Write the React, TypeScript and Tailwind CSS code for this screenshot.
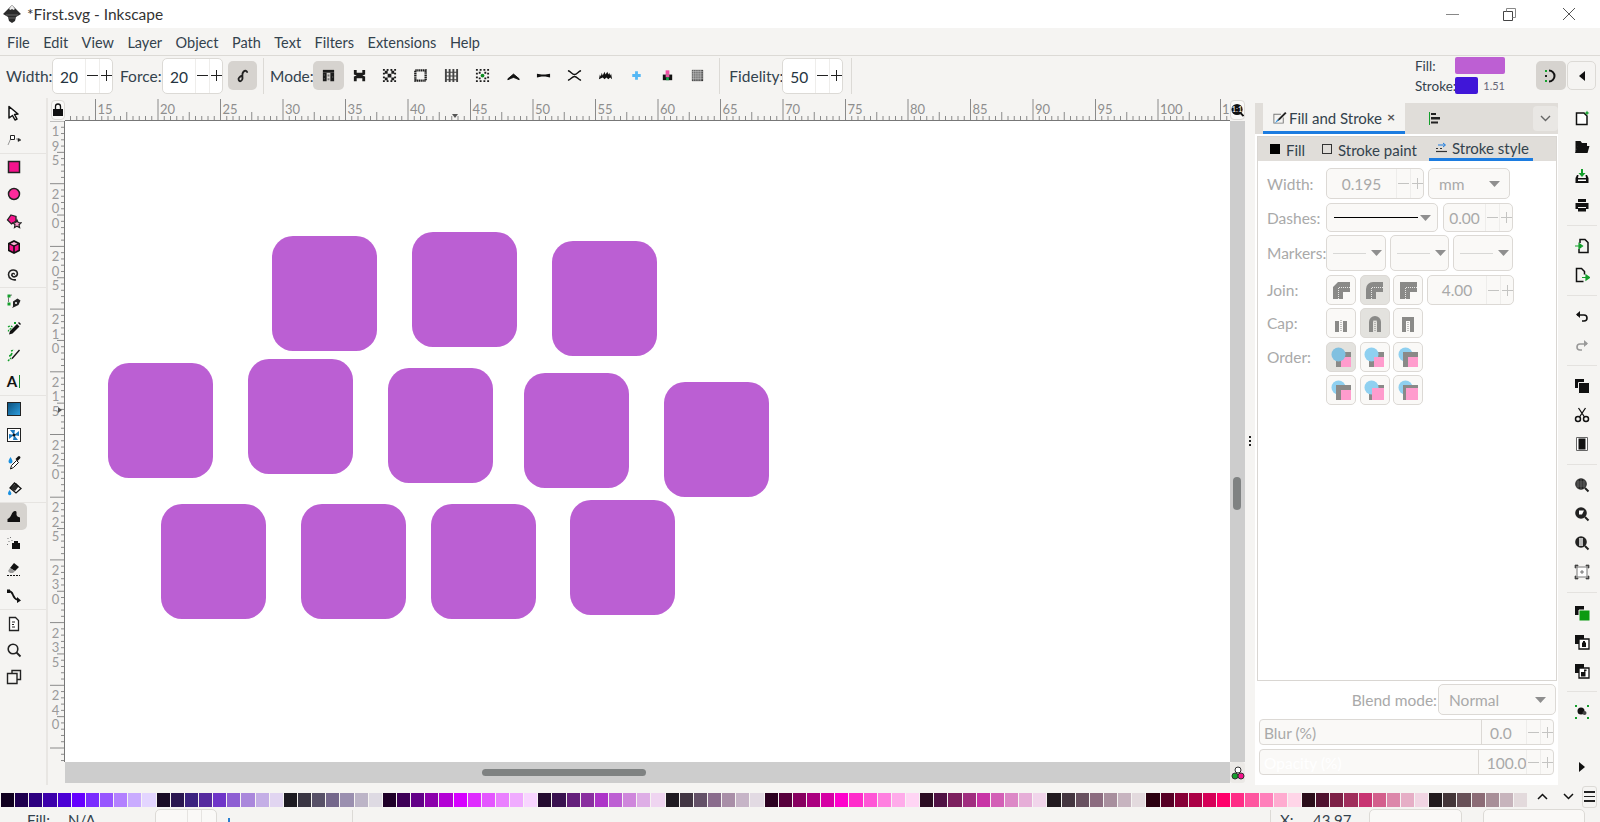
import type { ReactNode } from 'react'

const palette = [
  '#10001f', '#1f0050', '#2d0080', '#3c00ab', '#4b00d5', '#6600ff', '#7a2cff', '#9756ff', '#b380ff', '#c9abff', '#e3d5ff',
  '#190c26', '#2a1650', '#3c2380', '#562a9f', '#6f35c8', '#8e5fd3', '#aa87dc', '#c4aee6', '#e1d5f1',
  '#1d1b22', '#3a3644', '#585168', '#75688c', '#9a8faf', '#bcb4c7', '#dedae3',
  '#1f0029', '#3e0057', '#620087', '#8b00ab', '#b300d5', '#d600ff', '#df2cff', '#e456ff', '#ea80ff', '#f0abff', '#f8d5ff',
  '#240b30', '#3a1250', '#65207c', '#8a2ea0', '#ad34c8', '#bd5fd3', '#cf87dc', '#deaee6', '#efd5f1',
  '#201b22', '#423644', '#645168', '#8a6c8d', '#a98fa8', '#c6b4c7', '#e2dae3',
  '#2b0020', '#57003d', '#870060', '#ab0080', '#d500a4', '#ff00cc', '#ff2ccb', '#ff56d6', '#ff80e0', '#ffabea', '#ffd5f4',
  '#2b0d23', '#501245', '#7c205f', '#a02e7f', '#c834a6', '#d35fb6', '#dc87c6', '#e6aed8', '#f1d5eb',
  '#221b20', '#443640', '#685160', '#8c6c80', '#a88f9e', '#c7b4c0', '#e3dade',
  '#2b0010', '#570026', '#870037', '#ab0046', '#d50057', '#ff006a', '#ff2c86', '#ff56a0', '#ff80bb', '#ffabd0', '#ffd5e8',
  '#2b0d1a', '#50122f', '#7c2046', '#a02e5c', '#c83472', '#d35f8c', '#dc87aa', '#e6aec6', '#f1d5e3',
  '#221b1e', '#443639', '#685158', '#8c6c76', '#a88f98', '#c7b4bc', '#e3dadc',
]

const squares = [
  [206.5, 114.7], [346.5, 110.5], [486.5, 119.8],
  [43.3, 242.3], [183.3, 238], [323, 247.4], [458.5, 251.5], [598.5, 260.6],
  [96.3, 383], [236, 383], [365.6, 383], [505.4, 379],
]

const menus = ['File', 'Edit', 'View', 'Layer', 'Object', 'Path', 'Text', 'Filters', 'Extensions', 'Help']

function Ico({ children, size = 16 }: { children: ReactNode; size?: number }) {
  return (
    <svg width={size} height={size} viewBox="0 0 16 16" className="shrink-0">
      {children}
    </svg>
  )
}

function PlusMinus({ muted }: { muted?: boolean }) {
  const color = muted ? '#c4c4c2' : '#222'
  return (
    <>
      <div className="flex w-[14px] items-center justify-center border-l border-[#eeedeb]">
        <svg width="11" height="11" viewBox="0 0 11 11">
          <path d="M0 5.5h11" stroke={color} strokeWidth="1" />
        </svg>
      </div>
      <div className="flex w-[13px] items-center justify-center border-l border-[#eeedeb]">
        <svg width="11" height="11" viewBox="0 0 11 11">
          <path d="M0 5.5h11M5.5 0v11" stroke={color} strokeWidth="1" />
        </svg>
      </div>
    </>
  )
}

function TopSpin({ value }: { value: string }) {
  return (
    <div className="flex h-[36px] w-[61px] shrink-0 rounded-[5px] border border-[#dcdad6] bg-white">
      <div className="flex-1 text-center text-[15.5px] leading-[36px] text-[#26343f]">{value}</div>
      <PlusMinus />
    </div>
  )
}

function PanelSpin({ value, className }: { value: string; className: string }) {
  return (
    <div className={'flex shrink-0 rounded-[5px] border border-[#dcd9d5] bg-[#faf9f7] ' + className}>
      <div className="flex flex-1 items-center justify-center pt-[2px] text-[15.5px] text-[#a9a9a9]">{value}</div>
      <PlusMinus muted />
    </div>
  )
}

function Lab({ children }: { children: ReactNode }) {
  return <span className="w-[59px] pt-[2px]">{children}</span>
}

function Caret() {
  return (
    <svg width="11" height="6" viewBox="0 0 11 6" className="shrink-0">
      <path d="M0 0h11L5.5 6z" fill="#8f8f8f" />
    </svg>
  )
}

function Sq({ active, children }: { active?: boolean; children: ReactNode }) {
  return (
    <div
      className={
        'flex h-[30px] w-[30px] shrink-0 items-center justify-center rounded-[5px] border border-[#dcd9d5] ' +
        (active ? 'bg-[#e3e2de]' : 'bg-[#faf9f7]')
      }
    >
      {children}
    </div>
  )
}

function JoinIcon({ kind }: { kind: number }) {
  const outer = ['M0 17V5L5 0h12v10H10v7z', 'M0 17V7a7 7 0 0 1 7-7h10v10H10v7z', 'M0 17V0h17v10H10v7z'][kind]
  return (
    <svg width="17" height="17" viewBox="0 0 17 17">
      <path d={outer} fill="#8a8a88" />
      <path d="M5.5 17V5.500H17" fill="none" stroke="#e8e8e6" strokeWidth="1" strokeDasharray="1 1" />
    </svg>
  )
}

function CapIcon({ kind }: { kind: number }) {
  const p = ['M1 6h4v11H1zM9 6h4v11H9z', 'M1 17V7a6 6 0 0 1 12 0v10H9V7a2 2 0 0 0-4 0v10z', 'M1 17V2h12v15H9V6H5v11z'][kind]
  return (
    <svg width="14" height="17" viewBox="0 0 14 17">
      <path d={p} fill="#8a8a88" />
      <path d="M7 5v12" stroke="#8a8a88" strokeWidth="1" strokeDasharray="1 1" />
    </svg>
  )
}

function OrderIcon({ kind }: { kind: number }) {
  const circle = <circle key="c" cx="7.5" cy="7.5" r="7" fill={kind === 0 ? '#80c0e0' : '#8fd0f0'} />
  const stroke = <path key="s" d="M5 5h15v15H5z" fill="#8a8a88" />
  const fill = <path key="f" d={kind > 3 ? 'M8 8h12v12H8z' : 'M10 10h10v10H10z'} fill="#ff9ccd" />
  let layers = [stroke, fill, circle]
  if (kind === 1 || kind === 4) layers = [stroke, circle, fill]
  if (kind === 2 || kind === 3 || kind === 5) layers = [circle, stroke, fill]
  return (
    <svg width="21" height="21" viewBox="0 0 21 21">
      {layers}
    </svg>
  )
}

function ModeIcon({ index }: { index: number }) {
  const dots = 'M1 1h2v2H1zM5 1h2v2H5zM9 1h2v2H9zM13 1h2v2h-2zM1 13h2v2H1zM5 13h2v2H5zM9 13h2v2H9zM13 13h2v2h-2zM1 5h2v2H1zM1 9h2v2H1zM13 5h2v2h-2zM13 9h2v2h-2z'
  const body: ReactNode[] = [
    <g key="a">
      <path d="M2 2h12v3H2z" fill="#1c1c1c" />
      <path d="M2 5h4v9H2zM10 5h4v9h-4z" fill="#1c1c1c" />
      <path d="M7 7h2v2H7zM7 11h2v2H7zM3 7h1v1H3zM12 9h1v1h-1zM3 11h1v1H3z" fill="#777" />
    </g>,
    <path key="b" d={'M2 2h3v3h6V2h3v5l-3 1 3 1v5h-3v-3H5v3H2V9l3-1-3-1z'} fill="#1c1c1c" />,
    <path key="c" d={dots + 'M3 3h3v3H3zM10 3h3v3h-3zM6 6h4v4H6zM3 10h3v3H3zM10 10h3v3h-3z'} fill="#1c1c1c" />,
    <path key="d" d="M2.5 2.500h11v11h-11z" fill="none" stroke="#1c1c1c" strokeWidth="2.500" strokeDasharray="1.500 .5" />,
    <path key="e" d="M1 1h2v14H1zM5 1h2v14H5zM9 1h2v14H9zM13 1h2v14h-2zM1 4h14v1H1zM1 8h14v1H1zM1 12h14v1H1z" fill="#444" />,
    <g key="f">
      <path d={dots + 'M4 4h2v2H4zM10 4h2v2h-2zM4 10h2v2H4zM10 10h2v2h-2z'} fill="#1c1c1c" />
      <circle cx="8" cy="8" r="2" fill="#0a8a20" />
    </g>,
    <path key="g" d="M2 11.500 8 6.500l6 5v1l-3.500-1.500L8 10l-2.500 1L2 12.500z" fill="#111" strokeWidth="1" stroke="#111" />,
    <path key="h" d="M1 6v4l5-1h4l5 1V6l-5 1H6z" fill="#111" />,
    <path key="i" d="M1 3c3 0 4 4 7 4s4-4 7-4M1 13c3 0 4-4 7-4s4 4 7 4" fill="none" stroke="#111" strokeWidth="1.500" />,
    <path key="j" d="M1 12 2 7l1 2 1-4 1 3 2-4 1 3 2-3 1 3 1-2 1 3 1-2 1 6-2-2-2 2-2-2-2 2-2-2z" fill="#111" />,
    <path key="k" d="M6.5 3.500h3v3h3v3h-3v3h-3v-3h-3v-3h3z" fill="#55b8f5" />,
    <g key="l">
      <path d="M6 2.500h4v4H6z" fill="#f24fa5" />
      <path d="M3 7h5v6H3z" fill="#111" />
      <path d="M8 7h5v6H8z" fill="#111" />
      <path d="M6 7h4v3H6z" fill="#f24fa5" />
      <path d="M6.500 10h3v3h-3z" fill="#16a34a" />
    </g>,
    <g key="m">
      <path d="M2 2h12v12H2z" fill="#333" />
      <path d="M3.500 2v12M5.500 2v12M7.500 2v12M9.500 2v12M11.500 2v12M2 3.500h12M2 5.500h12M2 7.500h12M2 9.500h12M2 11.500h12" stroke="#ddd" strokeWidth="0.7" />
    </g>,
  ]
  return <Ico size={15}>{body[index]}</Ico>
}

const modeIcons = Array.from({ length: 13 }, (_, i) => i)

function Tool({ active, children }: { active?: boolean; children: ReactNode }) {
  return (
    <div
      className={
        'flex h-[26.6px] w-[27px] shrink-0 items-center justify-center rounded-r-[5px] ' +
        (active ? 'bg-[#d6d3cf]' : '')
      }
    >
      {children}
    </div>
  )
}

function LeftSep() {
  return <div className="h-[1px] w-[46px] shrink-0 bg-[#e6e4e1]" />
}

function LeftTools() {
  return (
    <div className="flex w-[48px] shrink-0 flex-col border-r-2 border-[#e8e6e3] pt-[2px]">
      <Tool>
        <Ico><path d="M3 1.500 12 9l-3.500.5 2.500 4.500-2 1L6.500 10.500 3 13z" fill="#fff" stroke="#111" strokeWidth="1.500" strokeLinejoin="round" /></Ico>
      </Tool>
      <Tool>
        <Ico>
          <path d="M2 13 5 6" stroke="#999" strokeWidth="1" />
          <path d="M4.500 3.500h4v4h-4z" fill="#fff" stroke="#222" strokeWidth="1" />
          <path d="M10 7h4M12 9.500l3-1.500-3-1.500z" stroke="#222" fill="#222" strokeWidth="0.5" />
        </Ico>
      </Tool>
      <LeftSep />
      <Tool>
        <Ico><path d="M2.500 2.500h11v11h-11z" fill="#f5138d" stroke="#222" strokeWidth="1.500" /></Ico>
      </Tool>
      <Tool>
        <Ico><circle cx="8" cy="8" r="5.500" fill="#ff2b9c" stroke="#222" strokeWidth="1.500" /></Ico>
      </Tool>
      <Tool>
        <Ico>
          <path d="M5 2 10 3.500 10 8 5.500 11 1.500 7z" fill="#f5138d" stroke="#222" strokeWidth="1.300" />
          <path d="m11 7 1.200 2.500 2.800.3-2 1.900.6 2.800-2.600-1.400-2.500 1.400.5-2.800-2-1.900 2.800-.3z" fill="#ff9ccd" stroke="#222" strokeWidth="1.200" />
        </Ico>
      </Tool>
      <Tool>
        <Ico>
          <path d="M8 1 14 4v8l-6 3-6-3V4z" fill="#111" />
          <path d="M3.500 5.500 7.200 7.400v5.300L3.500 10.800zM12.500 5.500 8.800 7.400v5.300l3.700-1.900z" fill="#f5138d" />
          <path d="M8 3 11.500 4.700 8 6.300 4.500 4.700z" fill="#ffb0d8" />
        </Ico>
      </Tool>
      <Tool>
        <Ico><path d="M8.200 8.500c.6-1-1.500-1.600-2.200-.3-.9 1.700 1.400 3.200 3.300 2.400 3-1.200 2.700-5.500-.6-6.400C5.300 3.200 2.400 5.700 2.500 8.700c.2 3.700 4 5.700 7.500 5" fill="none" stroke="#222" strokeWidth="1.600" /></Ico>
      </Tool>
      <LeftSep />
      <Tool>
        <Ico>
          <path d="M2.500 9V4.500C3 3 4.500 2 6 2" fill="none" stroke="#777" strokeWidth="1" />
          <path d="M1.500 1.500h3v3h-3zM1.500 9.500h3v3h-3z" fill="#14a02c" />
          <path d="M7 13.500 6 15l1.800-.7 4.700-2.300 2-4.500-3-2-4.500 3z" fill="#222" />
          <circle cx="10" cy="10" r="1" fill="#fff" />
        </Ico>
      </Tool>
      <Tool>
        <Ico>
          <path d="M2 7c3-2 5-.5 3.500 1S2 10 2.500 11.500" fill="none" stroke="#14a02c" strokeWidth="1.300" strokeDasharray="2 1" />
          <path d="M3 14.500 4 11 11 4l2.500 2.500-7 7z" fill="#111" />
          <path d="M12 3l1-1 2 2-1 1z" fill="#111" />
          <path d="M8 2h2v2H8z" fill="#14a02c" />
        </Ico>
      </Tool>
      <Tool>
        <Ico>
          <path d="M2 14 5 11M5 4 8 3" stroke="#14a02c" strokeWidth="1.500" strokeDasharray="2 1" />
          <path d="M5.500 12.500 6 10.500 13 2.500l1 1-7 8z" fill="#111" />
          <path d="M3 9c1.500 0 2.500-1 3-3" fill="none" stroke="#14a02c" strokeWidth="1.500" />
        </Ico>
      </Tool>
      <Tool>
        <span className="text-[15px] font-bold leading-none text-[#111]">A</span>
        <span className="ml-[2px] h-[13px] w-[1px] bg-[#14902c]" />
      </Tool>
      <LeftSep />
      <Tool>
        <svg width="14" height="14" viewBox="0 0 14 14">
          <defs>
            <linearGradient id="gradtool" x1="0" y1="0" x2="1" y2="1">
              <stop offset="0" stopColor="#0a4e7a" />
              <stop offset="1" stopColor="#2e9fe0" />
            </linearGradient>
          </defs>
          <rect x="0.5" y="0.5" width="13" height="13" fill="url(#gradtool)" stroke="#222" strokeWidth="1" />
        </svg>
      </Tool>
      <Tool>
        <svg width="14" height="14" viewBox="0 0 14 14">
          <rect x="0.5" y="0.5" width="13" height="13" fill="#fff" stroke="#222" strokeWidth="1" />
          <path d="M7 7 3 2h5zM7 7l5-4v5zM7 7l4 5H6zM7 7l-5 4V6z" fill="#1d7ac0" />
          <circle cx="7" cy="7" r="1.500" fill="#111" />
        </svg>
      </Tool>
      <Tool>
        <Ico>
          <path d="M4.500 3C3.500 5 2.500 6 2.500 7.500a2 2 0 0 0 4 0C6.500 6 5.500 5 4.500 3z" fill="#1a90e0" />
          <path d="M4.500 15l1-3.500 5-5 2 2-5 5z" fill="#fff" stroke="#111" strokeWidth="1" />
          <path d="M9.500 5 12 2.500a1.300 1.300 0 0 1 2 2L11.500 7z" fill="#111" />
        </Ico>
      </Tool>
      <Tool>
        <Ico>
          <path d="M8.500 2 15 7.500 10 12 4 7z" fill="#fff" stroke="#111" strokeWidth="1.300" />
          <path d="M4 7 10 2 13 5l-4 5z" fill="#111" opacity="0.9" />
          <path d="M3.500 9C2.700 10.500 2 11.500 2 12.500a1.700 1.700 0 0 0 3.400 0c0-1-.9-2-1.900-3.500z" fill="#1a90e0" />
        </Ico>
      </Tool>
      <LeftSep />
      <Tool active>
        <Ico><path d="M1.500 14V11c2-1 3-2 4-4.500C6.500 4 8 2.500 9.500 3c1.500.5 1 2 1 3.500 0 1.500 1.500 2.500 3.500 3V14z" fill="#111" /></Ico>
      </Tool>
      <Tool>
        <Ico>
          <path d="M1.500 3h1v1h-1zM4 2h1v1H4zM2.500 6h1v1h-1zM5.500 5h1v1h-1zM1 9h1v1H1z" fill="#777" />
          <path d="M6 8h8v6H6zM8 6h4v2H8z" fill="#111" />
        </Ico>
      </Tool>
      <Tool>
        <Ico>
          <path d="m8 2 5 4-4 4-5-3z" fill="#111" />
          <path d="m4 7 5 3-2 2H4l-2-2z" fill="#999" />
          <path d="M1 14.500h13" stroke="#111" strokeWidth="1" strokeDasharray="2 1" />
        </Ico>
      </Tool>
      <Tool>
        <Ico>
          <path d="M2 3c3 0 4 1 5 4s2 4 5 5" fill="none" stroke="#111" strokeWidth="1.800" />
          <path d="M11 9l4 3.500-4 2.500zM1 1.500h3V5H1z" fill="#111" />
        </Ico>
      </Tool>
      <LeftSep />
      <Tool>
        <Ico><path d="M3.500 1.500h6l3 3v10h-9z" fill="#fff" stroke="#222" strokeWidth="1.300" /><path d="M6 6h3M6 8.500h2M6 11h3" stroke="#222" strokeWidth="1" /></Ico>
      </Tool>
      <Tool>
        <Ico><circle cx="7" cy="7" r="4.800" fill="none" stroke="#222" strokeWidth="1.600" /><path d="m10.500 10.500 4 4" stroke="#222" strokeWidth="1.800" /></Ico>
      </Tool>
      <Tool>
        <Ico><path d="M6 4V1.500h8.500v9H11M1.500 4.500H11v10H1.500z" fill="none" stroke="#222" strokeWidth="1.400" /></Ico>
      </Tool>
    </div>
  )
}

function RightBtn({ children }: { children: ReactNode }) {
  return <div className="flex h-[29px] shrink-0 items-center justify-center">{children}</div>
}

function RightSep() {
  return (
    <div className="flex h-[12px] shrink-0 items-center justify-center">
      <div className="h-[1px] w-[30px] bg-[#e4e2df]" />
    </div>
  )
}

function Zoomer({ children }: { children: ReactNode }) {
  return (
    <Ico>
      <circle cx="7" cy="7" r="5.800" fill="#222" />
      {children}
      <path d="m11 11 3.500 3.500" stroke="#222" strokeWidth="2" />
    </Ico>
  )
}

function StackIcon({ children }: { children: ReactNode }) {
  return (
    <Ico>
      <path d="M1 1h9v9H1z" fill="#111" />
      {children}
    </Ico>
  )
}

function RightTools() {
  return (
    <div className="flex w-[42px] shrink-0 flex-col pt-[5.5px] pb-[3.5px] pl-[6px]">
      <RightBtn>
        <Ico>
          <path d="M2.500 3h7.500l3 3v8.500H2.500z" fill="#fff" stroke="#111" strokeWidth="1.500" />
          <path d="M13 0.500l.8 1.700 1.700.8-1.700.8-.8 1.700-.8-1.700-1.700-.8 1.700-.8z" fill="#14a02c" />
        </Ico>
      </RightBtn>
      <RightBtn>
        <Ico>
          <path d="M1.500 2h5l1.500 2h5v3H4L1.500 13z" fill="#111" />
          <path d="M3.500 7h12l-2 7H1z" fill="#111" />
        </Ico>
      </RightBtn>
      <RightBtn>
        <Ico>
          <path d="M7 1h2v4h2.500L8 9 4.500 5H7z" fill="#14a02c" />
          <path d="M1.500 10 3 7h1.500L4 10h8l-.5-3H13l1.500 3v5h-13z" fill="#111" />
          <path d="M4 11.500h8v1.500H4z" fill="#fff" />
        </Ico>
      </RightBtn>
      <RightBtn>
        <Ico>
          <path d="M4 2h8v3H4zM1.500 6h13v6H12v-2H4v2H1.500z" fill="#111" />
          <path d="M4 11h8v3.500H4z" fill="#111" />
        </Ico>
      </RightBtn>
      <RightSep />
      <RightBtn>
        <Ico>
          <path d="M6 5V1.500h5l3 3v10H5V11" fill="none" stroke="#111" strokeWidth="1.500" />
          <path d="M1 8h6M5 5.500 8.500 8 5 10.500z" fill="#14a02c" stroke="#14a02c" strokeWidth="1.200" />
        </Ico>
      </RightBtn>
      <RightBtn>
        <Ico>
          <path d="M9.500 14.500h-7v-13h5l3 3v3" fill="none" stroke="#111" strokeWidth="1.500" />
          <path d="M8 10.500h5M12 8l3.500 2.500L12 13z" fill="#14a02c" stroke="#14a02c" strokeWidth="1.200" />
        </Ico>
      </RightBtn>
      <RightSep />
      <RightBtn>
        <Ico>
          <path d="M3 7h7a3 3 0 0 1 0 6H8" fill="none" stroke="#111" strokeWidth="1.600" />
          <path d="M6 3v7L2 6.500z" fill="#111" />
        </Ico>
      </RightBtn>
      <RightBtn>
        <Ico>
          <path d="M13 7H6a3 3 0 0 0 0 6h2" fill="none" stroke="#999" strokeWidth="1.600" />
          <path d="M10 3v7l4-3.500z" fill="#999" />
        </Ico>
      </RightBtn>
      <RightSep />
      <RightBtn>
        <Ico>
          <path d="M1 1h9v9H1z" fill="#111" />
          <path d="M4.500 4.500h11v11h-11z" fill="#111" stroke="#f5f4f2" strokeWidth="1" />
        </Ico>
      </RightBtn>
      <RightBtn>
        <Ico>
          <circle cx="4" cy="12" r="2.500" fill="none" stroke="#111" strokeWidth="1.500" />
          <circle cx="12" cy="12" r="2.500" fill="none" stroke="#111" strokeWidth="1.500" />
          <path d="M4.500 1 10.500 10M11.500 1 5.500 10" stroke="#111" strokeWidth="1.300" />
        </Ico>
      </RightBtn>
      <RightBtn>
        <Ico>
          <path d="M2.500 1.500h11v13h-11z" fill="#fff" stroke="#666" strokeWidth="1" />
          <path d="M4.500 2.500h7v11h-7z" fill="#111" />
        </Ico>
      </RightBtn>
      <RightSep />
      <RightBtn>
        <Zoomer>
          <path d="M2 5h10M2 7h10M2 9h10M4 2v10M7 1.500v11M10 2v10" stroke="#888" strokeWidth="0.5" />
        </Zoomer>
      </RightBtn>
      <RightBtn>
        <Zoomer>
          <path d="M5 4.500h5l-2 4H5z" fill="#fff" />
        </Zoomer>
      </RightBtn>
      <RightBtn>
        <Zoomer>
          <path d="M5 3h4v8H5z" fill="#bbb" />
        </Zoomer>
      </RightBtn>
      <RightBtn>
        <Ico>
          <path d="M3 3h10v10H3z" fill="#fff" stroke="#777" strokeWidth="1" />
          <path d="M1 1h3v1H2v2H1zM12 1h3v3h-1V2h-2zM1 12h1v2h2v1H1zM14 12h1v3h-3v-1h2zM6 8h4M8 6v4" stroke="#444" strokeWidth="0.7" fill="#444" />
        </Ico>
      </RightBtn>
      <RightSep />
      <RightBtn>
        <StackIcon>
          <path d="M5 5h11v11H5z" fill="#0d9a12" stroke="#f5f4f2" strokeWidth="1" />
        </StackIcon>
      </RightBtn>
      <RightBtn>
        <StackIcon>
          <path d="M5 5h10v10H5z" fill="#fff" stroke="#111" strokeWidth="1.300" />
          <path d="M8 8.500h4V13H8zM9 8.500V7h2v1.500" fill="#111" />
        </StackIcon>
      </RightBtn>
      <RightBtn>
        <StackIcon>
          <path d="M5 5h10v10H5z" fill="#fff" stroke="#111" strokeWidth="1.300" />
          <path d="M7 9h4.500v4.500H7zM10 9V6.500h2.500V8" fill="#111" />
        </StackIcon>
      </RightBtn>
      <RightSep />
      <RightBtn>
        <Ico>
          <circle cx="7" cy="7" r="3.500" fill="#111" />
          <circle cx="10.500" cy="9" r="2" fill="#444" />
          <path d="M1 1h2v2H1zM13 1h2v2h-2zM1 13h2v2H1zM13 13h2v2h-2z" fill="#14a02c" />
        </Ico>
      </RightBtn>
      <div className="mt-auto flex h-[29px] shrink-0 items-center justify-center">
        <svg width="6" height="10" viewBox="0 0 6 10">
          <path d="M0 0l6 5-6 5z" fill="#111" />
        </svg>
      </div>
    </div>
  )
}

function HorizontalRuler() {
  const ticks = Array.from({ length: 187 }, (_, i) => i)
  const labels = Array.from({ length: 18 }, (_, i) => i)
  return (
    <svg width="1165" height="23" viewBox="0 0 1165 23" className="shrink-0">
      {ticks.map((i) => {
        const x = 30.5 + (i - 5) * 6.25
        const long = i % 10 === 5
        const mid = i % 10 === 0
        return (
          <path
            key={i}
            d={'M' + x + ' ' + (long ? 1 : mid ? 14 : 18) + 'V22'}
            stroke="#8a8a8a"
            strokeWidth="1"
          />
        )
      })}
      {labels.map((i) => (
        <text key={i} x={32.5 + i * 62.5} y="16" fontSize="13" fill="#8e8e8e">
          {15 + i * 5}
        </text>
      ))}
      <text x="1157" y="16" fontSize="13" fill="#8e8e8e">1</text>
      <path d="M0 22.500h1165" stroke="#777" strokeWidth="1" />
      <path d="M387 16h6l-3 4z" fill="#555" />
    </svg>
  )
}

function VerticalRuler() {
  const ticks = Array.from({ length: 103 }, (_, i) => i)
  const labels = ['195', '200', '205', '210', '215', '220', '225', '230', '235', '240']
  return (
    <svg width="17" height="641" viewBox="0 0 17 641" className="shrink-0">
      {ticks.map((i) => {
        const y = i * 6.27
        const long = i % 10 === 0
        const mid = i % 10 === 5
        return (
          <path
            key={i}
            d={'M' + (long ? 2 : mid ? 9 : 13) + ' ' + y + 'H16'}
            stroke="#8a8a8a"
            strokeWidth="1"
          />
        )
      })}
      {labels.map((label, i) =>
        label.split('').map((d, j) => (
          <text key={label + j} x="7.5" y={15 + i * 62.7 + j * 14.5} fontSize="13" fill="#9a9a9a" textAnchor="middle">
            {d}
          </text>
        )),
      )}
      <path d="M16.500 0v641" stroke="#777" strokeWidth="1" />
      <path d="M10 286v6l4-3z" fill="#555" />
    </svg>
  )
}

function Panel() {
  return (
    <div className="mt-[5px] flex w-[303px] shrink-0 flex-col bg-white">
      <div className="flex h-[31px] shrink-0 items-center bg-[#e0ddd9]">
        <div className="ml-[8px] flex h-[31px] w-[142px] items-center border-b-[3px] border-[#1c7ce0] bg-[#f5f4f2] pl-[9px]">
          <Ico size={15}>
            <path d="M1.500 4h8v1H2.500v8.500h9V8h1v6.500h-11z" fill="#777" />
            <path d="m6 12 1-3 7-7 1.500 1.500-7 7z" fill="#222" />
            <path d="M3 14.500 6 12l1-.5-1-2z" fill="#2a8fe0" />
          </Ico>
          <span className="ml-[2px] w-[98px] pt-[2px] text-[15px] text-[#33424d]">Fill and Stroke</span>
          <span className="text-[14px] leading-none font-bold text-[#555]">×</span>
        </div>
        <div className="ml-[24px] flex">
          <svg width="13" height="13" viewBox="0 0 13 13">
            <path d="M.5 0v13" stroke="#14a02c" strokeWidth="1" />
            <path d="M2 1h5v2H2zM2 5h9v2.500H2zM2 9.500h7V11.500H2z" fill="#222" />
          </svg>
        </div>
        <div className="ml-auto flex h-[25px] w-[25px] items-center justify-center rounded-[4px] bg-[#e9e7e4]">
          <svg width="11" height="7" viewBox="0 0 11 7">
            <path d="m1 1 4.500 4.500L10 1" fill="none" stroke="#666" strokeWidth="1.400" />
          </svg>
        </div>
      </div>
      <div className="mt-[2px] ml-[2px] flex h-[545px] w-[300px] shrink-0 flex-col border border-[#d9d6d2] bg-white">
        <div className="flex h-[24px] shrink-0 items-center bg-[#e0ddd9] text-[15px] text-[#33424d]">
          <span className="ml-[12px] h-[10px] w-[10px] bg-black" />
          <span className="ml-[6px] w-[36px] pt-[2px]">Fill</span>
          <span className="h-[10px] w-[10px] border border-[#333]" />
          <span className="ml-[6px] w-[91px] pt-[2px]">Stroke paint</span>
          <div className="flex h-[24px] w-[104px] items-center border-b-[3px] border-[#1c7ce0] pl-[7px]">
            <svg width="11" height="11" viewBox="0 0 11 11">
              <path d="M2 3h7M7 1l2.500 2L7 5" fill="none" stroke="#1c7ce0" strokeWidth="1" />
              <path d="M0 9.500h11" stroke="#333" strokeWidth="1.200" />
              <path d="M0 6.500h2M4 6.500h2" stroke="#333" strokeWidth="1.200" />
            </svg>
            <span className="ml-[5px] pt-[2px]">Stroke style</span>
          </div>
        </div>
        <div className="flex flex-col pl-[9px] text-[15.5px] text-[#a9a9a9]">
          <div className="mt-[7px] flex h-[31px] items-center">
            <Lab>Width:</Lab>
            <PanelSpin value="0.195" className="h-[31px] w-[98px]" />
            <div className="ml-[4px] flex h-[31px] w-[82px] items-center justify-between rounded-[5px] border border-[#dcd9d5] bg-[#faf9f7] pr-[9px] pl-[10px]">
              <span className="pt-[2px]">mm</span>
              <Caret />
            </div>
          </div>
          <div className="mt-[4px] flex h-[29px] items-center">
            <Lab>Dashes:</Lab>
            <div className="flex h-[29px] w-[112px] items-center rounded-[5px] border border-[#dcd9d5] bg-[#faf9f7] pl-[7px]">
              <span className="h-[1px] w-[84px] bg-black" />
              <span className="ml-[2px]"><Caret /></span>
            </div>
            <PanelSpin value="0.00" className="ml-[5px] h-[29px] w-[70px]" />
          </div>
          <div className="mt-[3px] flex h-[36px] items-center">
            <Lab>Markers:</Lab>
            <div className="flex gap-[4px]">
              {[0, 1, 2].map((i) => (
                <div key={i} className="flex h-[36px] w-[59.5px] items-center rounded-[5px] border border-[#dcd9d5] bg-[#faf9f7] pl-[6px]">
                  <span className="h-[1px] w-[33px] bg-[#d8d8d6]" />
                  <span className="ml-[5px]"><Caret /></span>
                </div>
              ))}
            </div>
          </div>
          <div className="mt-[4px] flex h-[30px] items-center">
            <Lab>Join:</Lab>
            <div className="flex gap-[3.5px]">
              <Sq><JoinIcon kind={0} /></Sq>
              <Sq active><JoinIcon kind={1} /></Sq>
              <Sq><JoinIcon kind={2} /></Sq>
            </div>
            <PanelSpin value="4.00" className="ml-[4px] h-[30px] w-[87px]" />
          </div>
          <div className="mt-[3px] flex h-[30px] items-center">
            <Lab>Cap:</Lab>
            <div className="flex gap-[3.5px]">
              <Sq><CapIcon kind={0} /></Sq>
              <Sq active><CapIcon kind={1} /></Sq>
              <Sq><CapIcon kind={2} /></Sq>
            </div>
          </div>
          <div className="mt-[4px] flex h-[30px] items-center">
            <Lab>Order:</Lab>
            <div className="flex gap-[3.5px]">
              <Sq active><OrderIcon kind={0} /></Sq>
              <Sq><OrderIcon kind={1} /></Sq>
              <Sq><OrderIcon kind={2} /></Sq>
            </div>
          </div>
          <div className="mt-[3px] ml-[59px] flex h-[30px] gap-[3.5px]">
            <Sq><OrderIcon kind={3} /></Sq>
            <Sq><OrderIcon kind={4} /></Sq>
            <Sq><OrderIcon kind={5} /></Sq>
          </div>
        </div>
      </div>
      <div className="flex flex-col pl-[4px] text-[15.5px] text-[#a9a9a9]">
        <div className="mt-[3px] flex h-[31px] items-center justify-end pr-[2px]">
          <span className="mr-[1px] pt-[2px]">Blend mode:</span>
          <div className="flex h-[31px] w-[118px] items-center justify-between rounded-[5px] border border-[#dcd9d5] bg-[#faf9f7] pr-[9px] pl-[10px]">
            <span className="pt-[2px]">Normal</span>
            <Caret />
          </div>
        </div>
        <div className="mt-[4px] flex h-[26px] w-[295px] rounded-[4px] border border-[#dcd9d5] bg-[#faf9f7]">
          <span className="w-[222px] border-r border-[#dcd9d5] pl-[4px] leading-[26px]">Blur (%)</span>
          <span className="flex-1 pl-[8px] leading-[26px]">0.0</span>
          <PlusMinus muted />
        </div>
        <div className="mt-[4px] flex h-[26px] w-[295px] rounded-[4px] border border-[#dcd9d5] bg-[#faf9f7]">
          <span className="w-[222px] border-r border-[#dcd9d5] pl-[4px] leading-[26px] text-white">Opacity (%)</span>
          <span className="flex-1 pl-[8px] leading-[26px]">100.0</span>
          <PlusMinus muted />
        </div>
      </div>
    </div>
  )
}

export default function App() {
  return (
    <div className="flex h-[822px] w-[1600px] flex-col overflow-hidden bg-[#f5f4f2] font-['Lato',sans-serif] whitespace-nowrap text-[#33424d]">
      <header className="flex h-[28px] shrink-0 items-center bg-white pl-[2px]">
        <svg width="20" height="20" viewBox="0 0 20 20" className="shrink-0">
          <path d="M10 1 19 10 14 13l-1 4-3 2-3-2-1-4-5-3z" fill="#2b2b2b" />
          <path d="M10 1 13 5 11.500 6 10 5 8.500 6 7 5z" fill="#eee" />
          <path d="M4 11h12M6 14h8" stroke="#777" strokeWidth="0.8" />
        </svg>
        <span className="ml-[5px] pt-[2px] text-[15.5px] text-[#333]">*First.svg - Inkscape</span>
        <div className="ml-auto flex items-center pr-[24px]">
          <svg width="13" height="13" viewBox="0 0 13 13">
            <path d="M0 6.500h13" stroke="#888" strokeWidth="1" />
          </svg>
          <svg width="13" height="13" viewBox="0 0 13 13" className="ml-[44px]">
            <path d="M.5 3.500h9v9h-9z" fill="none" stroke="#444" strokeWidth="1" />
            <path d="M3.500 3.500v-3h9v9h-3" fill="none" stroke="#888" strokeWidth="1" />
          </svg>
          <svg width="14" height="14" viewBox="0 0 14 14" className="ml-[46px]">
            <path d="m1 1 12 12M13 1 1 13" stroke="#555" strokeWidth="1" />
          </svg>
        </div>
      </header>

      <nav className="flex h-[28px] shrink-0 items-center gap-[13.5px] border-b border-[#dcdad6] pt-[2px] pl-[7px] text-[14.5px]">
        {menus.map((m) => (
          <span key={m}>{m}</span>
        ))}
      </nav>

      <div className="flex h-[42px] shrink-0 items-center pb-[3px] pl-[6px] text-[15.5px]">
        <span className="w-[46px] pt-[2px]">Width:</span>
        <TopSpin value="20" />
        <span className="ml-[7px] w-[42px] pt-[2px]">Force:</span>
        <TopSpin value="20" />
        <div className="ml-[5px] flex h-[29px] w-[29px] items-center justify-center rounded-[5px] bg-[#d6d3cf]">
          <Ico size={15}>
            <path d="M8 8C5 9 3 11 4 13s4 1 4-2-1-5 1-7 4-1 4 1" fill="none" stroke="#222" strokeWidth="2" />
          </Ico>
        </div>
        <div className="ml-[6px] h-[36px] w-[1px] bg-[#dcdad6]" />
        <span className="ml-[6px] w-[43px] pt-[2px]">Mode:</span>
        <div className="flex">
          {modeIcons.map((i) => (
            <div
              key={i}
              className={
                'flex h-[29px] w-[30.8px] items-center justify-center rounded-[5px] ' + (i === 0 ? 'bg-[#d6d3cf]' : '')
              }
            >
              <ModeIcon index={i} />
            </div>
          ))}
        </div>
        <div className="ml-[6px] h-[36px] w-[1px] bg-[#dcdad6]" />
        <span className="ml-[9px] w-[53px] pt-[2px]">Fidelity:</span>
        <TopSpin value="50" />
        <div className="ml-[8px] h-[36px] w-[1px] bg-[#dcdad6]" />
        <div className="ml-auto flex items-center pr-[4px]">
          <div className="flex w-[90px] flex-col gap-[2px] text-[13.5px] leading-[17px]">
            <div className="flex items-center">
              <span className="w-[40px] pt-[1px]">Fill:</span>
              <span className="h-[17px] w-[50px] rounded-[2px] bg-[#bd5fd3]" />
            </div>
            <div className="flex items-center">
              <span className="w-[40px] pt-[1px]">Stroke:</span>
              <span className="h-[17px] w-[26px] rounded-[2px] bg-[#4016d8]" />
              <span className="ml-[5px] text-[11px] text-[#667]">1.51</span>
            </div>
          </div>
          <div className="ml-[31px] flex h-[29px] w-[30px] items-center justify-center rounded-[5px] bg-[#d6d3cf]">
            <Ico>
              <path d="M6 2.500a5.500 5.500 0 1 1 0 11" fill="none" stroke="#111" strokeWidth="2" />
              <path d="M2 2h2v2H2zM2 12h2v2H2z" fill="#14a02c" />
              <path d="M2 7h2v2H2z" fill="#222" />
            </Ico>
          </div>
          <div className="ml-[1px] flex h-[29px] w-[29px] items-center justify-center rounded-[5px] border border-[#dcdad6]">
            <svg width="6" height="10" viewBox="0 0 6 10">
              <path d="M6 0 0 5l6 5z" fill="#111" />
            </svg>
          </div>
        </div>
      </div>

      <div className="flex h-[687px] shrink-0">
        <LeftTools />

        <div className="flex w-[1197px] shrink-0 flex-col">
          <div className="flex h-[23px] shrink-0">
            <div className="flex w-[17px] shrink-0 items-center justify-center pl-[2px]">
              <div className="flex h-[20px] w-[14px] items-center justify-center rounded-[4px] border border-[#dcdad6] bg-[#faf9f7]">
                <svg width="10" height="13" viewBox="0 0 10 13">
                  <path d="M2.500 6V3.500a2.500 2.500 0 0 1 5 0V6" fill="none" stroke="#111" strokeWidth="1.300" />
                  <path d="M0 6h10v7H0z" fill="#111" />
                </svg>
              </div>
            </div>
            <HorizontalRuler />
            <div className="flex w-[15px] shrink-0 items-center justify-center">
              <div className="flex h-[20px] w-[15px] items-center justify-center rounded-[4px] border border-[#dcdad6] bg-[#faf9f7]">
                <svg width="14" height="14" viewBox="0 0 14 14">
                  <circle cx="6.5" cy="6.5" r="6" fill="#111" />
                  <path d="m10.500 10.500 3 3" stroke="#111" strokeWidth="2" />
                  <text x="6.5" y="9.5" textAnchor="middle" fontSize="8" fill="#fff">1:1</text>
                </svg>
              </div>
            </div>
          </div>

          <div className="flex h-[641px] shrink-0">
            <VerticalRuler />
            <div className="relative w-[1165px] shrink-0 bg-white">
              {squares.map(([x, y]) => (
                <div
                  key={x + '-' + y}
                  className="absolute h-[115px] w-[105px] rounded-[21px] bg-[#bb5fd3]"
                  style={{ left: x, top: y }}
                />
              ))}
            </div>
            <div className="w-[15px] shrink-0 bg-[#cdcdcd] pt-[356px] pl-[3px]">
              <div className="h-[33px] w-[8px] rounded-[4px] bg-[#7f8282]" />
            </div>
          </div>

          <div className="ml-[17px] flex h-[21px] shrink-0">
            <div className="w-[1165px] shrink-0 bg-[#cdcdcd] pt-[7px] pl-[417px]">
              <div className="h-[7px] w-[164px] rounded-[4px] bg-[#7f8282]" />
            </div>
            <div className="flex w-[15px] shrink-0 items-center justify-center rounded-[3px] bg-[#ebe9e6]">
              <svg width="14" height="16" viewBox="0 0 14 16">
                <circle cx="7" cy="5" r="3" fill="#fff" stroke="#333" strokeWidth="1" />
                <circle cx="4" cy="11" r="3" fill="#14a02c" stroke="#333" strokeWidth="1" />
                <circle cx="10" cy="11" r="3" fill="#f5138d" stroke="#333" strokeWidth="1" />
              </svg>
            </div>
          </div>
        </div>

        <div className="flex w-[10px] shrink-0 flex-col items-center justify-center gap-[2px] pb-[2px]">
          <span className="h-[2px] w-[2px] bg-[#222]" />
          <span className="h-[2px] w-[2px] bg-[#222]" />
          <span className="h-[2px] w-[2px] bg-[#222]" />
        </div>

        <Panel />
        <RightTools />
      </div>

      <div className="flex h-[23px] shrink-0 pl-[1px]">
        <div className="flex w-[1529px] shrink-0 pt-[8px]">
          {palette.map((c, i) => (
            <div key={c + i} className="mr-[1px] h-[14px] w-[13.15px] shrink-0" style={{ backgroundColor: c }} />
          ))}
        </div>
        <div className="ml-[7px] flex items-center">
          <svg width="11" height="7" viewBox="0 0 11 7">
            <path d="m1 6 4.500-4.500L10 6" fill="none" stroke="#111" strokeWidth="1.500" />
          </svg>
          <svg width="11" height="7" viewBox="0 0 11 7" className="ml-[15px]">
            <path d="m1 1 4.500 4.500L10 1" fill="none" stroke="#111" strokeWidth="1.500" />
          </svg>
          <div className="ml-[8px] flex h-[22px] w-[15px] flex-col items-center justify-center gap-[3px] rounded-[3px] border border-[#dcdad6]">
            <span className="h-[1.5px] w-[11px] bg-[#222]" />
            <span className="h-[1.5px] w-[11px] bg-[#222]" />
            <span className="h-[1.5px] w-[11px] bg-[#222]" />
          </div>
        </div>
      </div>

      <footer className="flex h-[14px] shrink-0 items-start overflow-hidden text-[15px] leading-[20px]">
        <span className="mt-[2px] ml-[27px] w-[41px]">Fill:</span>
        <span className="mt-[2px] w-[87px]">N/A</span>
        <div className="mt-[1px] flex h-[30px] w-[62px] rounded-[5px] border border-[#dcdad6] bg-[#faf9f7]">
          <div className="flex-1" />
          <div className="w-[14px] border-l border-[#e6e4e1]" />
          <div className="w-[15px] border-l border-[#e6e4e1]" />
        </div>
        <span className="mt-[10px] ml-[11px] h-[6px] w-[2px] bg-[#2a7fd0]" />
        <span className="mt-[2px] ml-[122px] h-[14px] w-[1px] bg-[#dcdad6]" />
        <span className="mt-[2px] ml-[917px] h-[14px] w-[1px] bg-[#dcdad6]" />
        <span className="mt-[2px] ml-[9px] w-[33px]">X:</span>
        <span className="mt-[2px] w-[56px]">43.97</span>
        <div className="mt-[1px] flex h-[30px] w-[93px] rounded-[5px] border border-[#dcdad6] bg-[#faf9f7]" />
        <div className="mt-[1px] ml-[21px] flex h-[30px] w-[102px] rounded-[5px] border border-[#dcdad6] bg-[#faf9f7]" />
      </footer>
    </div>
  )
}
